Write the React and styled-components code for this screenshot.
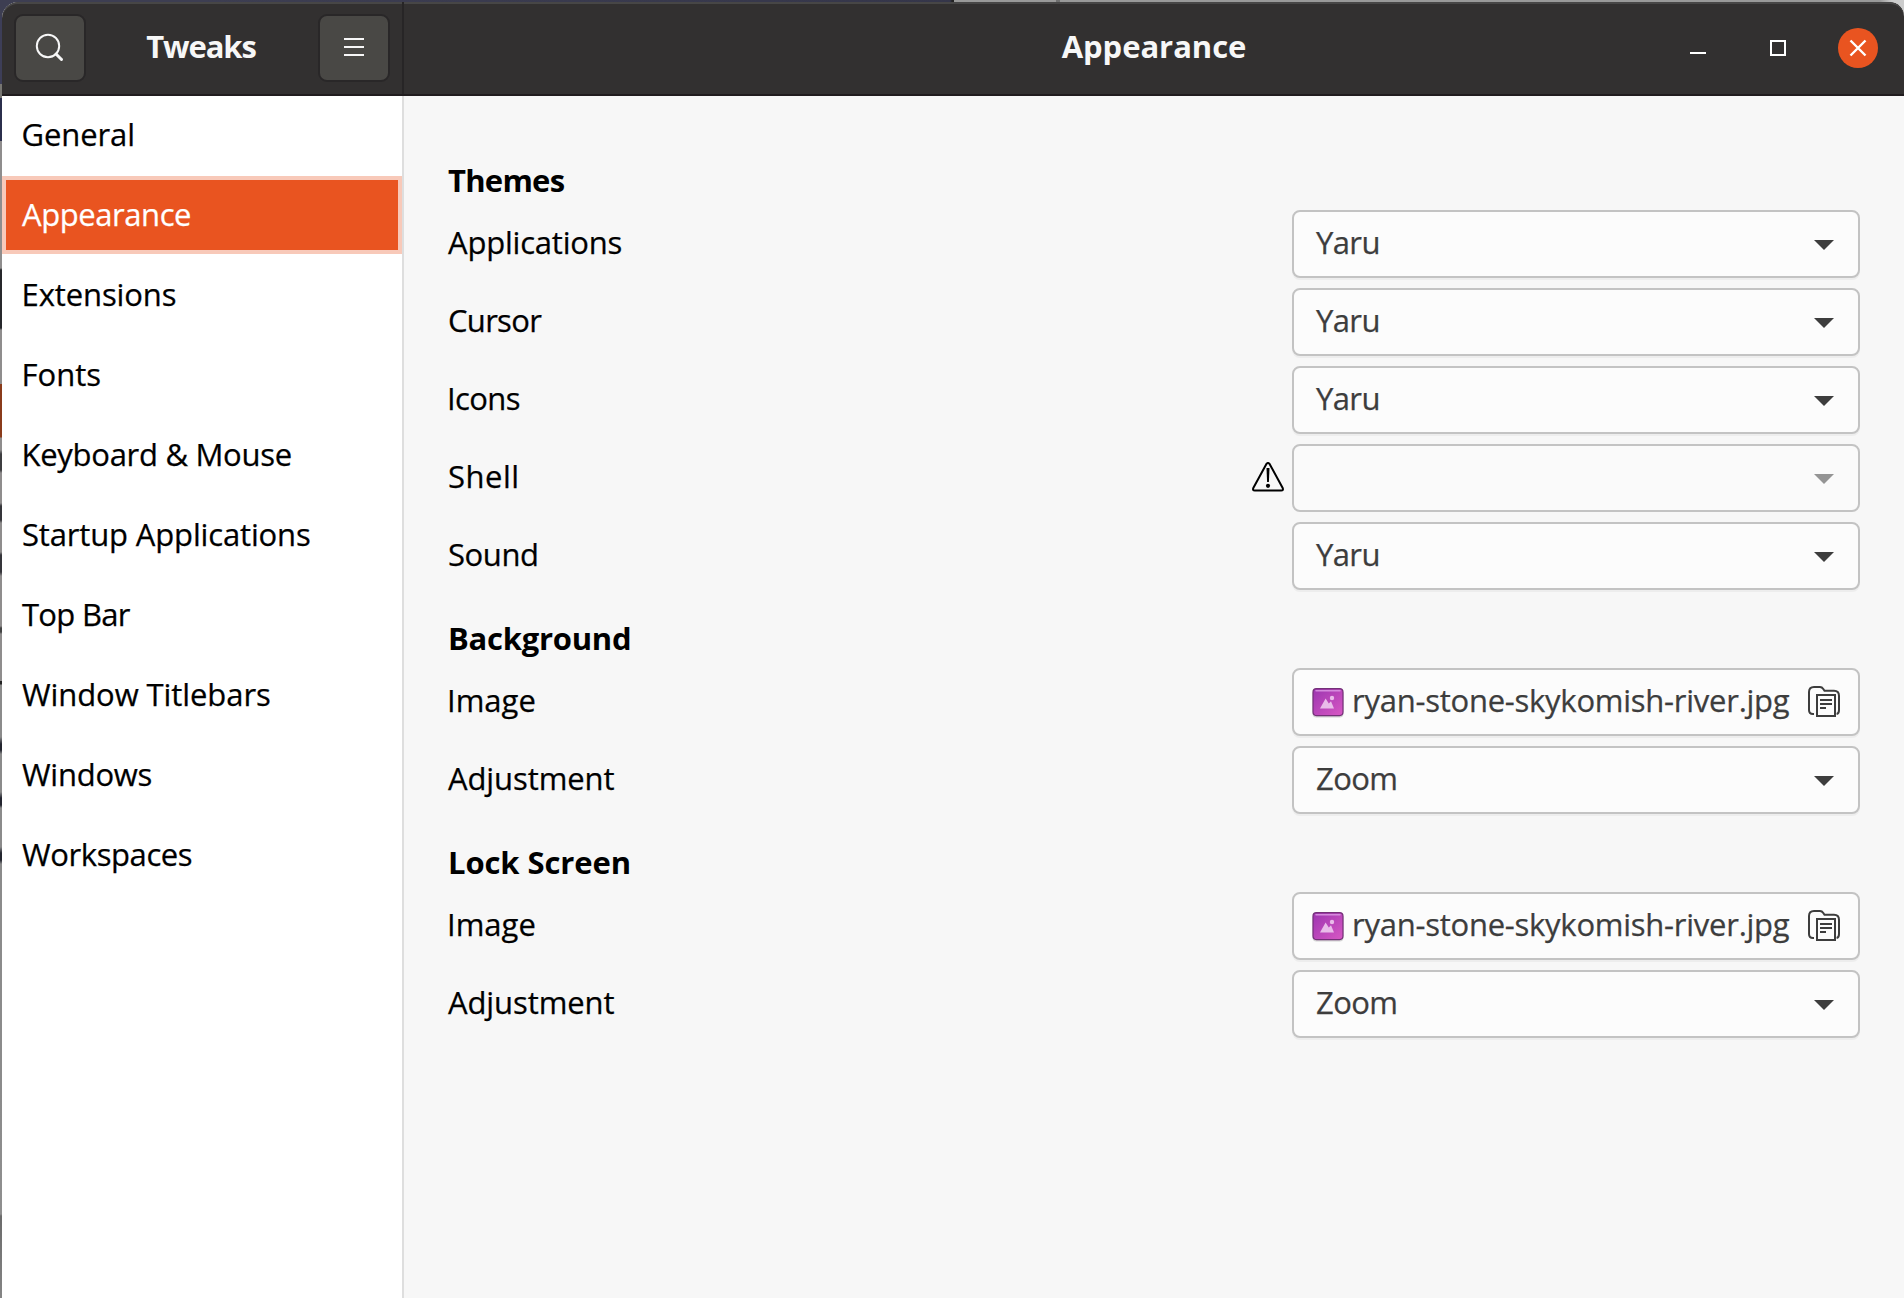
import React from "react";
import styled, { createGlobalStyle } from "styled-components";

const GlobalStyle = createGlobalStyle`
  * { box-sizing: border-box; }
  html, body { margin: 0; height: 100%; overflow: hidden; }
  body { font-family: "Open Sans", "Noto Sans", sans-serif; font-size: 31px; color: #000; }
  svg { display: block; flex: none; }
  button { font: inherit; color: inherit; margin: 0; padding: 0; border: 0; background: none; text-align: left; }
`;

/* Other windows on the desktop show through along the top and left edges. */
const Desktop = styled.div`
  height: 1298px;
  width: 1904px;
  padding: 2px 0 0 2px;
  background:
    linear-gradient(90deg, #3d3e52 0 200px, #35364a 950px, #222 952px 954px, #999 954px 1056px, #707070 1056px 1060px, #999 1060px 1880px, #ccc 1892px) 0 0 / 100% 16px no-repeat,
    linear-gradient(180deg,
      #3d3e58 0 84px, #777672 84px 98px, #2b2f4c 98px 141px, #8f8d8d 141px 268px,
      #26272b 270px 328px, #8f8d8d 330px 384px, #8a3b1b 384px 437px, #8f8d8d 438px 450px,
      #3d3d40 454px 470px, #8f8d8d 473px 503px, #35353a 506px 520px, #8f8d8d 523px 552px,
      #35353a 555px 572px, #8f8d8d 576px 626px, #444 628px 632px, #8f8d8d 634px 681px,
      #222 681px 684px, #8b8b8b 685px 737px, #23252f 744px 750px, #8b8b8b 754px 792px,
      #23252f 798px 805px, #8b8b8b 808px 847px, #23252f 853px 860px, #8b8b8b 864px 1090px,
      #8f8f8f 1214px, #6b6b6b 1216px, #858585 1298px);
`;

const Window = styled.div`
  display: flex;
  flex-direction: column;
  height: 1296px;
  overflow: hidden;
  border-radius: 16px 14px 0 0;
  background: #f7f7f7;
`;

const HeaderBar = styled.header`
  display: flex;
  flex: none;
  height: 94px;
  background: #323030;
  border-bottom: 2px solid #201c1e;
  border-radius: 16px 14px 0 0;
  box-shadow: inset 0 2px 0 #474646;
  color: #f7f7f7;
`;

const SidebarHeader = styled.div`
  display: flex;
  align-items: center;
  justify-content: space-between;
  width: 402px;
  padding: 0 12px;
  border-right: 2px solid #272526;
`;

const MainHeader = styled.div`
  flex: 1;
  display: grid;
  grid-template-columns: 1fr auto 1fr;
  align-items: center;
`;

const Title = styled.h1`
  grid-column: 2;
  margin: 0;
  padding: 0 ${(p) => p.$trail || 0}px 4px 0;
  font-size: 31px;
  line-height: 42px;
  font-weight: 700;
  white-space: nowrap;
  letter-spacing: ${(p) => p.$track || 0}px;
`;

const HeaderButton = styled.button`
  display: grid;
  place-items: center;
  width: 72px;
  height: 68px;
  border: 2px solid #292728;
  border-radius: 9px;
  background: #494845;
`;

const WindowControls = styled.div`
  display: flex;
  justify-content: flex-end;
  gap: 40px;
  padding-right: 26px;
`;

const ControlButton = styled.button`
  width: 40px;
  height: 40px;
  border-radius: 50%;
  background: ${(p) => (p.$close ? "#e95420" : "transparent")};
`;

const Body = styled.div`
  flex: 1;
  display: flex;
  min-height: 0;
`;

const Sidebar = styled.nav`
  display: flex;
  flex-direction: column;
  gap: 2px;
  width: 402px;
  background: #fff;
  border-right: 2px solid #dedede;
`;

const SidebarItem = styled.button`
  flex: none;
  height: 78px;
  padding-left: ${(p) => 16 - (p.$nudge || 0)}px;
  border: 4px solid ${(p) => (p.$active ? "#f8c9b9" : "transparent")};
  background: ${(p) => (p.$active ? "#e95420" : "transparent")};
  color: ${(p) => (p.$active ? "#fff" : "#000")};
  line-height: 68px;
  padding-bottom: 2px;
  white-space: nowrap;
  letter-spacing: ${(p) => p.$track || 0}px;
  -webkit-text-stroke: 0.25px currentColor;
`;

const Content = styled.main`
  flex: 1;
  display: flex;
  flex-direction: column;
  gap: 30px;
  padding: 66px 44px 0;
`;

const Section = styled.section`
  display: flex;
  flex-direction: column;
  gap: 10px;
`;

const SectionTitle = styled.h2`
  margin: 0 0 2px;
  font-size: 31px;
  line-height: 36px;
  font-weight: 700;
  letter-spacing: ${(p) => p.$track || 0}px;
`;

const Row = styled.div`
  display: flex;
  align-items: center;
  height: 68px;
`;

const Label = styled.span`
  flex: 1;
  padding-bottom: 4px;
  line-height: 64px;
  text-indent: ${(p) => -(p.$nudge || 0)}px;
  letter-spacing: ${(p) => p.$track || 0}px;
  -webkit-text-stroke: 0.25px currentColor;
`;

const Warning = styled.span`
  margin-right: 8px;
`;

const Field = styled.button`
  display: flex;
  align-items: center;
  width: 568px;
  height: 68px;
  padding: 0 ${(p) => (p.$file ? 18 : 24)}px 0 ${(p) => (p.$file ? 18 : 22)}px;
  border: 2px solid #c3c3c3;
  border-radius: 8px;
  background: ${(p) => (p.$disabled ? "#fafafa" : "#fcfcfc")};
  box-shadow: ${(p) => (p.$disabled ? "none" : "0 2px 0 #ededed")};
  color: ${(p) => (p.$disabled ? "#949494" : "#3d3d3d")};
`;

const Value = styled.span`
  flex: 1;
  padding-bottom: 4px;
  line-height: 60px;
  white-space: nowrap;
  letter-spacing: ${(p) => p.$track || 0}px;
  -webkit-text-stroke: 0.25px currentColor;
`;

const FileName = styled(Value)`
  margin-left: 8px;
`;

const SearchIcon = () => (
  <svg width="32" height="32" viewBox="0 0 32 32" fill="none" stroke="#f7f7f7">
    <circle cx="14" cy="14" r="11.2" strokeWidth="2" />
    <path d="M22 22l5.5 5.5" strokeWidth="3" strokeLinecap="round" />
  </svg>
);

const MenuIcon = () => (
  <svg width="20" height="20" viewBox="0 0 20 20" fill="#f7f7f7">
    <path d="M0 0h20v2H0zM0 8h20v2H0zM0 16h20v2H0z" />
  </svg>
);

const ControlIcon = ({ d, width = 2 }) => (
  <svg width="40" height="40" viewBox="0 0 40 40" fill="none" stroke="#fff" strokeWidth={width}>
    <path d={d} />
  </svg>
);

const ArrowIcon = () => (
  <svg width="20" height="20" viewBox="0 0 20 20">
    <path d="M0 6h20L10 16z" fill="currentColor" />
  </svg>
);

const WarningIcon = () => (
  <svg width="32" height="32" viewBox="0 0 32 32" fill="none" stroke="#000">
    <path d="M14.4 1.9Q16 0 17.6 1.9L30.7 26Q31.6 28.6 29.2 28.6H2.8Q.4 28.6 1.3 26z" strokeWidth="2" strokeLinejoin="round" />
    <path d="M14.5 6h3l-.6 14h-1.8z" fill="#000" stroke="none" />
    <circle cx="16" cy="23.8" r="2.1" fill="#000" stroke="none" />
  </svg>
);

const ImageFileIcon = ({ id }) => (
  <svg width="32" height="32" viewBox="0 0 32 32">
    <defs>
      <linearGradient id={id} x1="0" y1="0" x2="1" y2="1">
        <stop offset="0" stopColor="#9c35b0" />
        <stop offset="1" stopColor="#d858c4" />
      </linearGradient>
    </defs>
    <rect x="0.5" y="4" width="31" height="27.5" rx="4" fill="#d2d2d2" />
    <rect x="1" y="2.6" width="30" height="27" rx="3.5" fill={`url(#${id})`} stroke="#743078" strokeWidth="1.2" />
    <path d="M4 4.8h24" stroke="#d58bdd" strokeWidth="1.6" strokeLinecap="round" />
    <path d="M8 22.5l5.6-10 3.2 5 2.2-2.2 3 7.2z" fill="#e9bce9" />
    <circle cx="20" cy="12" r="2.2" fill="#e9bce9" />
  </svg>
);

const FolderIcon = () => (
  <svg width="32" height="32" viewBox="0 0 32 32" fill="none" stroke="#3d3d3d" strokeWidth="2">
    <path d="M6 28H5Q1 28 1 24V6Q1 1 6 1H12Q14 1 15.3 3L16.5 4.8H26Q31 4.8 31 10V24Q31 27.6 28.6 28" />
    <path d="M9 9h18v21H9z" />
    <path d="M12 14h12M12 18h12M12 22h6" />
  </svg>
);

const pages = [
  { name: "General", track: -0.1, nudge: 0.5 },
  { name: "Appearance", track: -0.43 },
  { name: "Extensions", track: -0.1, nudge: 0.5 },
  { name: "Fonts", nudge: 0.5 },
  { name: "Keyboard & Mouse", track: -0.28, nudge: 0.5 },
  { name: "Startup Applications", track: -0.15 },
  { name: "Top Bar", track: -0.7 },
  { name: "Window Titlebars", track: -0.08 },
  { name: "Windows", track: -0.25 },
  { name: "Workspaces", track: -0.4 },
];

const imageRow = { label: "Image", nudge: 1, file: "ryan-stone-skykomish-river.jpg" };
const adjustmentRow = { label: "Adjustment", track: -0.1, value: "Zoom", valueTrack: -0.6 };

const sections = [
  {
    title: "Themes",
    track: -0.75,
    rows: [
      { label: "Applications", track: -0.2, value: "Yaru", valueTrack: -0.6 },
      { label: "Cursor", track: -0.7, value: "Yaru", valueTrack: -0.6 },
      { label: "Icons", track: -0.6, nudge: 1, value: "Yaru", valueTrack: -0.6 },
      { label: "Shell", track: 0.5, value: "", disabled: true },
      { label: "Sound", track: -0.4, value: "Yaru", valueTrack: -0.6 },
    ],
  },
  { title: "Background", track: -0.25, rows: [imageRow, adjustmentRow] },
  { title: "Lock Screen", track: -0.1, rows: [imageRow, adjustmentRow] },
];

const SettingRow = ({ row, id }) => (
  <Row>
    <Label $track={row.track} $nudge={row.nudge}>{row.label}</Label>
    {row.disabled && (
      <Warning>
        <WarningIcon />
      </Warning>
    )}
    {row.file ? (
      <Field $file>
        <ImageFileIcon id={id} />
        <FileName $track={-0.25}>{row.file}</FileName>
        <FolderIcon />
      </Field>
    ) : (
      <Field $disabled={row.disabled}>
        <Value $track={row.valueTrack}>{row.value}</Value>
        <ArrowIcon />
      </Field>
    )}
  </Row>
);

export default function App() {
  return (
    <>
      <GlobalStyle />
      <Desktop>
        <Window>
          <HeaderBar>
            <SidebarHeader>
              <HeaderButton aria-label="Search"><SearchIcon /></HeaderButton>
              <Title $track={-1.1} $trail={2}>Tweaks</Title>
              <HeaderButton aria-label="Menu"><MenuIcon /></HeaderButton>
            </SidebarHeader>
            <MainHeader>
              <Title $track={-0.05}>Appearance</Title>
              <WindowControls>
                <ControlButton aria-label="Minimize"><ControlIcon d="M12 25h16" /></ControlButton>
                <ControlButton aria-label="Maximize"><ControlIcon d="M13 13h14v14H13z" /></ControlButton>
                <ControlButton $close aria-label="Close"><ControlIcon d="M12.5 12.5l15 15M27.5 12.5l-15 15" width={2.4} /></ControlButton>
              </WindowControls>
            </MainHeader>
          </HeaderBar>
          <Body>
            <Sidebar>
              {pages.map((page) => (
                <SidebarItem key={page.name} $active={page.name === "Appearance"} $track={page.track} $nudge={page.nudge}>
                  {page.name}
                </SidebarItem>
              ))}
            </Sidebar>
            <Content>
              {sections.map((section) => (
                <Section key={section.title}>
                  <SectionTitle $track={section.track}>{section.title}</SectionTitle>
                  {section.rows.map((row) => (
                    <SettingRow key={row.label} row={row} id={`thumb-${section.title.replace(" ", "-")}`} />
                  ))}
                </Section>
              ))}
            </Content>
          </Body>
        </Window>
      </Desktop>
    </>
  );
}
